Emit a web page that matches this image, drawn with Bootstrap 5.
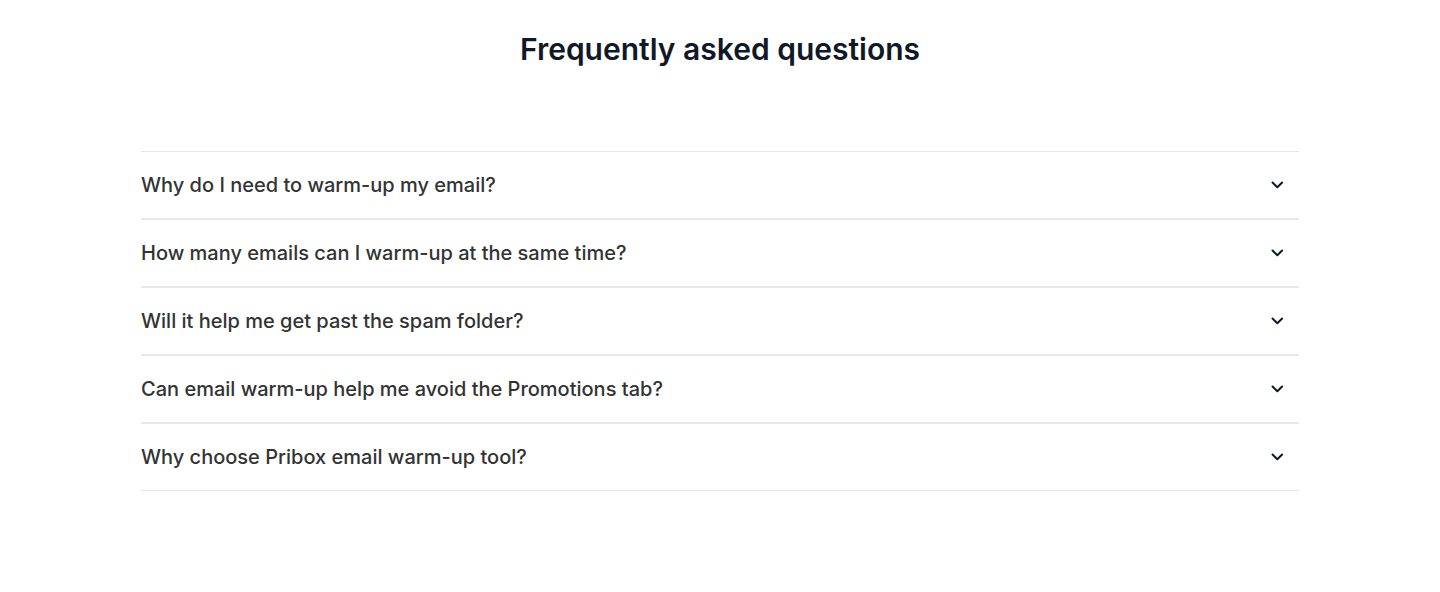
<!DOCTYPE html>
<html lang="en">
<head>
<meta charset="utf-8">
<meta name="viewport" content="width=device-width, initial-scale=1">
<title>Frequently asked questions</title>
<link href="https://cdn.jsdelivr.net/npm/bootstrap@5.3.0/dist/css/bootstrap.min.css" rel="stylesheet">
<style>
  body { font-family: Inter, "Liberation Sans", sans-serif; background: #fff; }
  .faq { max-width: 1182px; padding: 31px 12px 100px; }
  .faq-title { font-size: 30px; line-height: 36px; font-weight: 600; color: #111827; margin-bottom: 84px; }
  .faq-item { border: 1px solid #e5e7eb; border-width: 1px 0; }
  .faq-toggle { min-height: 66px; padding: 0 15px 0 0; font-size: 20px; line-height: 28px; font-weight: 500; color: #333; background: none; border: 0; }
</style>
</head>
<body>
<main class="faq container-fluid mx-auto">
  <h2 class="faq-title text-center">Frequently asked questions</h2>
  <div id="faqList">
    <div class="faq-item">
      <button class="faq-toggle d-flex w-100 align-items-center justify-content-between text-start" type="button" data-bs-toggle="collapse" data-bs-target="#a1" aria-expanded="false" aria-controls="a1">Why do I need to warm-up my email?
        <svg width="14" height="8" viewBox="0 0 14 8" fill="none" stroke="#111827" stroke-width="2" stroke-linecap="round" stroke-linejoin="round" aria-hidden="true"><path d="M2.5 1.5 7.3 6.2 12.1 1.5"/></svg></button>
      <div class="collapse" id="a1"></div>
    </div>
    <div class="faq-item">
      <button class="faq-toggle d-flex w-100 align-items-center justify-content-between text-start" type="button" data-bs-toggle="collapse" data-bs-target="#a2" aria-expanded="false" aria-controls="a2">How many emails can I warm-up at the same time?
        <svg width="14" height="8" viewBox="0 0 14 8" fill="none" stroke="#111827" stroke-width="2" stroke-linecap="round" stroke-linejoin="round" aria-hidden="true"><path d="M2.5 1.5 7.3 6.2 12.1 1.5"/></svg></button>
      <div class="collapse" id="a2"></div>
    </div>
    <div class="faq-item">
      <button class="faq-toggle d-flex w-100 align-items-center justify-content-between text-start" type="button" data-bs-toggle="collapse" data-bs-target="#a3" aria-expanded="false" aria-controls="a3">Will it help me get past the spam folder?
        <svg width="14" height="8" viewBox="0 0 14 8" fill="none" stroke="#111827" stroke-width="2" stroke-linecap="round" stroke-linejoin="round" aria-hidden="true"><path d="M2.5 1.5 7.3 6.2 12.1 1.5"/></svg></button>
      <div class="collapse" id="a3"></div>
    </div>
    <div class="faq-item">
      <button class="faq-toggle d-flex w-100 align-items-center justify-content-between text-start" type="button" data-bs-toggle="collapse" data-bs-target="#a4" aria-expanded="false" aria-controls="a4">Can email warm-up help me avoid the Promotions tab?
        <svg width="14" height="8" viewBox="0 0 14 8" fill="none" stroke="#111827" stroke-width="2" stroke-linecap="round" stroke-linejoin="round" aria-hidden="true"><path d="M2.5 1.5 7.3 6.2 12.1 1.5"/></svg></button>
      <div class="collapse" id="a4"></div>
    </div>
    <div class="faq-item">
      <button class="faq-toggle d-flex w-100 align-items-center justify-content-between text-start" type="button" data-bs-toggle="collapse" data-bs-target="#a5" aria-expanded="false" aria-controls="a5">Why choose Pribox email warm-up tool?
        <svg width="14" height="8" viewBox="0 0 14 8" fill="none" stroke="#111827" stroke-width="2" stroke-linecap="round" stroke-linejoin="round" aria-hidden="true"><path d="M2.5 1.5 7.3 6.2 12.1 1.5"/></svg></button>
      <div class="collapse" id="a5"></div>
    </div>
  </div>
</main>
<script src="https://cdn.jsdelivr.net/npm/bootstrap@5.3.0/dist/js/bootstrap.bundle.min.js"></script>
</body>
</html>
